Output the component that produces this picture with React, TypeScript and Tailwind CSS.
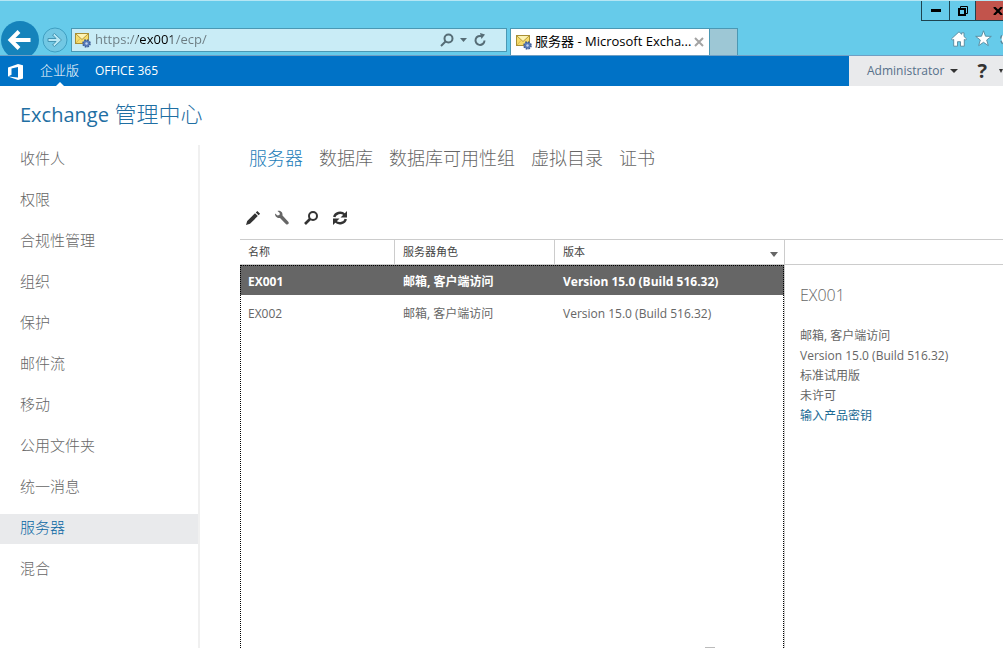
import React from "react";

const navItems = [
  "收件人",
  "权限",
  "合规性管理",
  "组织",
  "保护",
  "邮件流",
  "移动",
  "公用文件夹",
  "统一消息",
  "服务器",
  "混合",
];

const tabs = ["服务器", "数据库", "数据库可用性组", "虚拟目录", "证书"];

const servers = [
  { name: "EX001", role: "邮箱, 客户端访问", version: "Version 15.0 (Build 516.32)" },
  { name: "EX002", role: "邮箱, 客户端访问", version: "Version 15.0 (Build 516.32)" },
];

const SiteIcon = () => (
  <svg className="h-4 w-4 shrink-0" viewBox="0 0 16 16">
    <rect x="0.5" y="1.5" width="13" height="10" fill="#f6dc6c" stroke="#a98f35" />
    <path d="M1 2l6 5.5L13 2" fill="#fdf3b4" stroke="#b79b3c" />
    <path d="M1 11l4-4.500M13 11L9 6.500" stroke="#d8bb50" fill="none" />
    <circle cx="11.500" cy="11.500" r="3.300" fill="#5c83c0" stroke="#3d5c97" strokeWidth="2" strokeDasharray="1.500 1.100" />
    <circle cx="11.500" cy="11.500" r="2.800" fill="#5679b8" />
    <circle cx="11.500" cy="11.500" r="1.200" fill="#c5d5ee" />
  </svg>
);

const Caret = ({ className }: { className: string }) => (
  <svg className={className} viewBox="0 0 8 4" preserveAspectRatio="none">
    <path d="M0 0h8L4 4z" fill="currentColor" />
  </svg>
);

const BrowserBar: React.FC = () => {
  return (
    <div className="h-14 overflow-hidden border-t border-b border-t-[#b5e6f4] border-b-[#6f9fc4] bg-[#66cbea]">
      {/* Window buttons */}
      <div className="flex h-5 justify-end">
        <button aria-label="Minimize" className="flex w-7 items-end justify-center border-b border-l border-[#1d4350] pb-1">
          <span className="mb-1 h-[3px] w-2.5 bg-black"></span>
        </button>
        <button aria-label="Restore" className="flex w-[26px] items-center justify-center border-b border-l border-[#1d4350]">
          <svg className="h-2.5 w-2.5" viewBox="0 0 10 10">
            <path d="M2.500 2V.5h7v7H8" fill="none" stroke="#000" />
            <path d="M1 3h6v6H1z" fill="none" stroke="#000" strokeWidth="2" />
          </svg>
        </button>
        <button aria-label="Close" className="flex w-7 items-center justify-end border-b border-l border-[#1d4350] bg-[#c2544c]">
          <svg className="h-2 w-2.5" viewBox="0 0 10 8">
            <path d="M1 0l8 8M9 0L1 8" stroke="#000" strokeWidth="2.200" />
          </svg>
        </button>
      </div>

      <div className="flex h-[34px] items-start pt-[7px]">
        <button aria-label="Back" className="-mt-[7px] ml-px h-[38px] w-[38px] shrink-0 rounded-full bg-[#1583bb]">
          <svg className="h-[38px] w-[38px]" viewBox="0 0 38 38">
            <path d="M29.500 19H10M18 10.500L9.500 19l8.500 8.500" fill="none" stroke="#fff" strokeWidth="4" />
          </svg>
        </button>
        <button aria-label="Forward" className="-mt-px ml-[3px] h-[26px] w-[26px] shrink-0">
          <svg className="h-[26px] w-[26px]" viewBox="0 0 26 26">
            <circle cx="13" cy="13" r="12" fill="#72c8e4" stroke="#3f9fc2" />
            <path d="M6 11.500h8L10.500 8l2-1.500L19.500 13l-7 6.500-2-1.500 3.500-3.500H6z" fill="#b9e8f5" stroke="#4495b3" />
          </svg>
        </button>
        <div className="ml-[3px] flex h-6 flex-[412] items-center border border-[#4a98b4] bg-[#c9ecf6] pr-[19px] pl-[3px]">
          <SiteIcon />
          <input
            aria-label="Address"
            readOnly
            value="https://ex001/ecp/"
            className="ml-1 min-w-0 flex-1 bg-[linear-gradient(90deg,#6b7b81_43px,#000_43px,#000_77px,#6b7b81_77px)] bg-clip-text text-[13px] text-transparent outline-none"
          />
          <button aria-label="Search">
            <svg className="h-3.5 w-3.5" viewBox="0 0 14 14">
              <circle cx="8.500" cy="5.500" r="4" fill="none" stroke="#566d76" strokeWidth="2" />
              <path d="M5.500 8.500L1 13" stroke="#566d76" strokeWidth="2" />
            </svg>
          </button>
          <Caret className="mx-1.5 h-1 w-[7px] text-[#566d76]" />
          <button aria-label="Refresh">
            <svg className="h-3.5 w-3.5" viewBox="0 0 14 14">
              <path d="M11.500 7.500A4.500 4.500 0 1 1 9 3.400" fill="none" stroke="#566d76" strokeWidth="2" />
              <path d="M7 0l5 1.500L8.500 6z" fill="#566d76" />
            </svg>
          </button>
        </div>
        <div className="ml-[3px] flex h-[27px] w-[200px] shrink-0 items-center border border-b-0 border-[#4a98b4] bg-white px-[5px] text-[13px] text-black">
          <SiteIcon />
          <span className="ml-[3px] flex-1 whitespace-nowrap">服务器 - Microsoft Excha...</span>
          <button aria-label="Close tab">
            <svg className="h-2.5 w-2.5" viewBox="0 0 10 10">
              <path d="M1 1l8 8M9 1L1 9" stroke="#a3a3a3" strokeWidth="2" />
            </svg>
          </button>
        </div>
        <button aria-label="New tab" className="h-[27px] w-7 shrink-0 border-t border-r border-[#4a98b4] bg-[#9dc7d5]"></button>
        <div className="flex flex-[265] items-center justify-end gap-2 pt-0.5">
          <button aria-label="Home">
            <svg className="h-4 w-4" viewBox="0 0 16 16">
              <path d="M8 .8l2.700 2.500V1.800h2.300v3.700l2.500 2.300-1.200 1.400-1-.8v6.800H9.500v-4.500h-3v4.500H2.700V8.400l-1 .8L.5 7.800z" fill="#fff" stroke="#56889c" strokeWidth=".9" />
            </svg>
          </button>
          <button aria-label="Favorites">
            <svg className="h-[17px] w-[17px]" viewBox="0 0 17 17">
              <path d="M8.500.8l2 5.400 5.800.2-4.600 3.600 1.600 5.600-4.800-3.300-4.800 3.300L5.300 10 .7 6.400l5.800-.2z" fill="#fff" stroke="#56889c" strokeWidth=".9" />
            </svg>
          </button>
          <button aria-label="Tools" className="w-[3px] overflow-hidden">
            <svg className="h-4 w-4" viewBox="0 0 16 16">
              <circle cx="8" cy="8" r="6" fill="none" stroke="#56889c" strokeWidth="4" strokeDasharray="2.700 2" />
              <circle cx="8" cy="8" r="5" fill="none" stroke="#fff" strokeWidth="3" />
            </svg>
          </button>
        </div>
      </div>
    </div>
  );
};

const App: React.FC = () => {
  return (
    <div className="flex min-h-screen flex-col overflow-hidden bg-white font-['Open_Sans','Noto_Sans_CJK_SC',sans-serif] text-xs text-[#666666]">
      <BrowserBar />

      {/* Office bar */}
      <header className="flex h-[30px] items-stretch bg-[#0072c6] text-xs text-white">
        <svg className="mt-2 ml-2 h-4 w-4" viewBox="0 0 16 16">
          <path d="M0 3.500L10 0l5 1.300v13.200L10 16 0 12.500l10 1V3L3.500 4.500v6.300L0 12.500z" fill="#fff" />
        </svg>
        <a href="#" className="relative ml-4 text-[13px] leading-7 font-light">
          企业版
          <svg className="absolute bottom-0 left-1/2 h-1 w-2 -translate-x-1/2" viewBox="0 0 8 4">
            <path d="M4 0l4 4H0z" fill="#fff" />
          </svg>
        </a>
        <a href="#" className="ml-4 leading-[30px]">OFFICE 365</a>
        <div className="ml-auto flex w-[154px] items-center bg-[#e9eaec] pl-[18px] text-[#56708a]">
          <button className="flex items-center">
            Administrator
            <Caret className="ml-1.5 h-1 w-2 text-[#333333]" />
          </button>
          <button aria-label="Help" className="ml-auto flex items-center text-xl font-bold text-[#333333]">
            ?
            <Caret className="ml-3 h-1 w-1" />
          </button>
        </div>
      </header>

      <h1 className="mt-[11px] pl-5 text-[22px] leading-8 font-light text-[#1f6fa3]">
        <span className="text-xl font-normal">Exchange</span> 管理中心
      </h1>

      <div className="mt-4 flex flex-1 items-stretch">
        {/* Feature list */}
        <nav className="flex w-[200px] shrink-0 flex-col gap-[11px] border-r-2 border-[#f0f0f0] text-[15px] font-light">
          {navItems.map((item) => (
            <a
              key={item}
              href="#"
              className={
                item === "服务器"
                  ? "bg-[#e9eaec] pb-1 pl-5 leading-[26px] text-[#0a67a3]"
                  : "pb-1 pl-5 leading-[26px]"
              }
            >
              {item}
            </a>
          ))}
        </nav>

        <main className="ml-10 flex flex-1 flex-col">
          <div className="flex gap-4 pl-[9px] text-lg leading-[26px] font-light text-[#666666]">
            {tabs.map((tab) => (
              <a key={tab} href="#" className={tab === "服务器" ? "text-[#1a7cb8]" : ""}>
                {tab}
              </a>
            ))}
          </div>

          {/* Toolbar */}
          <div className="mt-[39px] mb-[13px] flex gap-[13px] pl-[5px]">
            <button aria-label="Edit">
              <svg className="h-4 w-4" viewBox="0 0 16 16">
                <path d="M1 15l1.200-4L10 3.300l2.800 2.800L5 13.800zM10.800 2.500L12.300 1l2.800 2.800-1.500 1.500z" fill="#333" />
              </svg>
            </button>
            <button aria-label="Properties">
              <svg className="h-4 w-4" viewBox="0 0 16 16">
                <path d="M1 3.500l2.500 2 2-.5.3-2L3.500 1C6 .3 9 2 8.500 5.500l6 6.500c1 1.500-1 3.300-2.400 2.200L6 8C3.500 8.500.8 6.500 1 3.500z" fill="#666" />
              </svg>
            </button>
            <button aria-label="Search">
              <svg className="h-4 w-4" viewBox="0 0 16 16">
                <circle cx="10" cy="6" r="4" fill="none" stroke="#333" strokeWidth="2" />
                <path d="M7 9l-5 5" stroke="#333" strokeWidth="2.600" />
              </svg>
            </button>
            <button aria-label="Refresh">
              <svg className="h-4 w-4" viewBox="0 0 16 16">
                <path d="M2.200 7a6 5.300 0 0 1 10.300-2.500M13.800 9a6 5.300 0 0 1-10.300 2.500" fill="none" stroke="#333" strokeWidth="2.400" />
                <path d="M15 1v6.500H8.500zM1 15V8.500h6.500z" fill="#333" />
              </svg>
            </button>
          </div>

          <div className="flex flex-1 items-stretch">
            <div className="relative flex flex-1 flex-col border-r border-[#cccccc]">
              <table className="w-full table-fixed border-separate border-spacing-0 text-left">
                <colgroup>
                  <col className="w-[155px]" />
                  <col className="w-40" />
                  <col />
                </colgroup>
                <thead>
                  <tr className="h-[26px] text-[11px] text-[#444444]">
                    <th className="border-y border-r border-[#cccccc] pl-2 font-normal">名称</th>
                    <th className="border-y border-r border-[#cccccc] pl-2 font-normal">服务器角色</th>
                    <th className="border-y border-[#cccccc] pl-2 font-normal">
                      <div className="flex items-center justify-between pr-1.5">
                        版本
                        <Caret className="mt-1 h-[5px] w-2 text-[#666666]" />
                      </div>
                    </th>
                  </tr>
                </thead>
                <tbody>
                  {servers.map((server) => (
                    <tr
                      key={server.name}
                      className={
                        server.name === "EX001"
                          ? "h-[30px] bg-[#666666] font-bold text-white"
                          : "h-[34px]"
                      }
                    >
                      <td className="pt-1 pl-2">{server.name}</td>
                      <td className="pt-1 pl-2">{server.role}</td>
                      <td className="pt-1 pl-2">{server.version}</td>
                    </tr>
                  ))}
                </tbody>
              </table>
              {/* Focus rectangle */}
              <div className="pointer-events-none absolute inset-x-0 top-[26px] bottom-0 border border-b-0 border-dotted border-black"></div>
              <div className="mt-auto mr-[69px] h-px w-2.5 self-end bg-[#bbbbbb]"></div>
            </div>

            {/* Details pane */}
            <aside className="w-[218px] shrink-0">
              <div className="h-[26px] border-t border-b border-[#cccccc]"></div>
              <div className="pt-4 pl-[15px] leading-5">
                <h2 className="mb-[17px] text-base leading-7 font-light">EX001</h2>
                <p>邮箱, 客户端访问</p>
                <p>Version 15.0 (Build 516.32)</p>
                <p>标准试用版</p>
                <p>未许可</p>
                <a href="#" className="text-[#1b6a94]">输入产品密钥</a>
              </div>
            </aside>
          </div>
        </main>
      </div>
    </div>
  );
};

export default App;
